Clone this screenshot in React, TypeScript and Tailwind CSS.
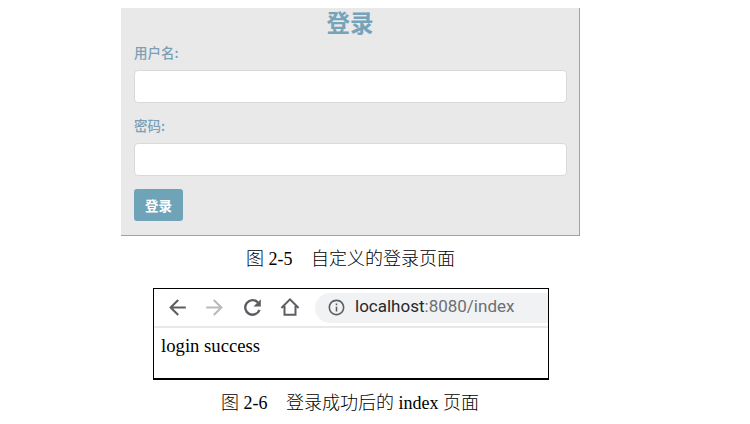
import React from "react";
import { MdArrowBack, MdArrowForward, MdInfoOutline } from "react-icons/md";

function RefreshIcon() {
  return (
    <svg viewBox="0 0 24 24" className="ml-[13px] size-[25px] shrink-0" fill="none">
      <path d="M17.200 7.200A7 7 0 1 0 18.700 14.200" stroke="#5b5e62" strokeWidth="2.300" />
      <path d="M20 4v7h-7z" fill="#5b5e62" />
    </svg>
  );
}

function HomeIcon() {
  return (
    <svg viewBox="0 0 20 20" className="size-5 shrink-0" fill="none" stroke="#5b5e62" strokeWidth="2">
      <path d="M1.4 11 10 2.400l8.600 8.600M4.500 9v8.700h11V9" />
    </svg>
  );
}

function Field({ label }: { label: string }) {
  return (
    <label className="mb-3 block">
      <span className="block h-7 text-[13.500px] leading-[20px] font-medium text-[#7b9fb5]">{label}</span>
      <input className="block h-[33px] w-full rounded-[4px] border border-[#d9d9d9] bg-white px-2 outline-none" />
    </label>
  );
}

function LoginPanel() {
  return (
    <form className="mt-2 ml-[121px] h-[228px] w-[459px] border-r border-b border-[#a2a2a2] bg-[#e9e9e9] pr-3 pl-[13px] font-['Noto_Sans_CJK_SC',sans-serif]">
      <h1 className="h-[34px] pr-px text-center text-[23.500px] leading-[28px] font-bold text-[#75a3b9]">登录</h1>
      <Field label="用户名:" />
      <Field label="密码:" />
      <button type="button" className="mt-[13px] block h-8 w-[49px] rounded-[3px] bg-[#6fa3b8] text-[13.500px] leading-8 font-bold text-white">
        登录
      </button>
    </form>
  );
}

function BrowserShot() {
  return (
    <section className="ml-[153px] h-[92px] w-[396px] overflow-hidden border border-b-2 border-black bg-white">
      <div className="flex h-[39px] items-center border-b-2 border-[#e8e8e9]">
        <MdArrowBack className="ml-[11px] size-[25px] shrink-0 text-[#5b5e62]" />
        <MdArrowForward className="ml-3 size-[25px] shrink-0 text-[#b9babc]" />
        <RefreshIcon />
        <div className="ml-[15px] flex pb-px"><HomeIcon /></div>
        <div className="ml-[15px] flex h-[30px] flex-1 items-center rounded-l-full bg-[#f1f2f4] pl-3 font-['Roboto',sans-serif] text-[17px] text-[#6c6f73]">
          <MdInfoOutline className="mr-[9px] size-[19px] shrink-0 text-[#5b5e62]" />
          <span className="pb-px whitespace-nowrap"><span className="text-[#27282b]">localhost</span>:8080/index</span>
        </div>
      </div>
      <p className="pt-[6px] pl-[7px] font-['Liberation_Serif',serif] text-[18.700px] leading-6 text-black">login success</p>
    </section>
  );
}

export default function App() {
  return (
    <main className="flow-root h-[424px] w-[750px] overflow-hidden bg-white font-['Liberation_Serif','Noto_Sans_CJK_SC',serif]">
      <LoginPanel />
      <p className="ml-[246px] flex h-[52px] pt-[9px] text-[18px] leading-[28px] font-light whitespace-nowrap text-black">
        <span className="w-[65px]">图 2-5</span><span>自定义的登录页面</span>
      </p>
      <BrowserShot />
      <p className="ml-[221px] flex pt-[9px] text-[18px] leading-[28px] font-light whitespace-nowrap text-black">
        <span className="w-[65px]">图 2-6</span><span>登录成功后的 index 页面</span>
      </p>
    </main>
  );
}
